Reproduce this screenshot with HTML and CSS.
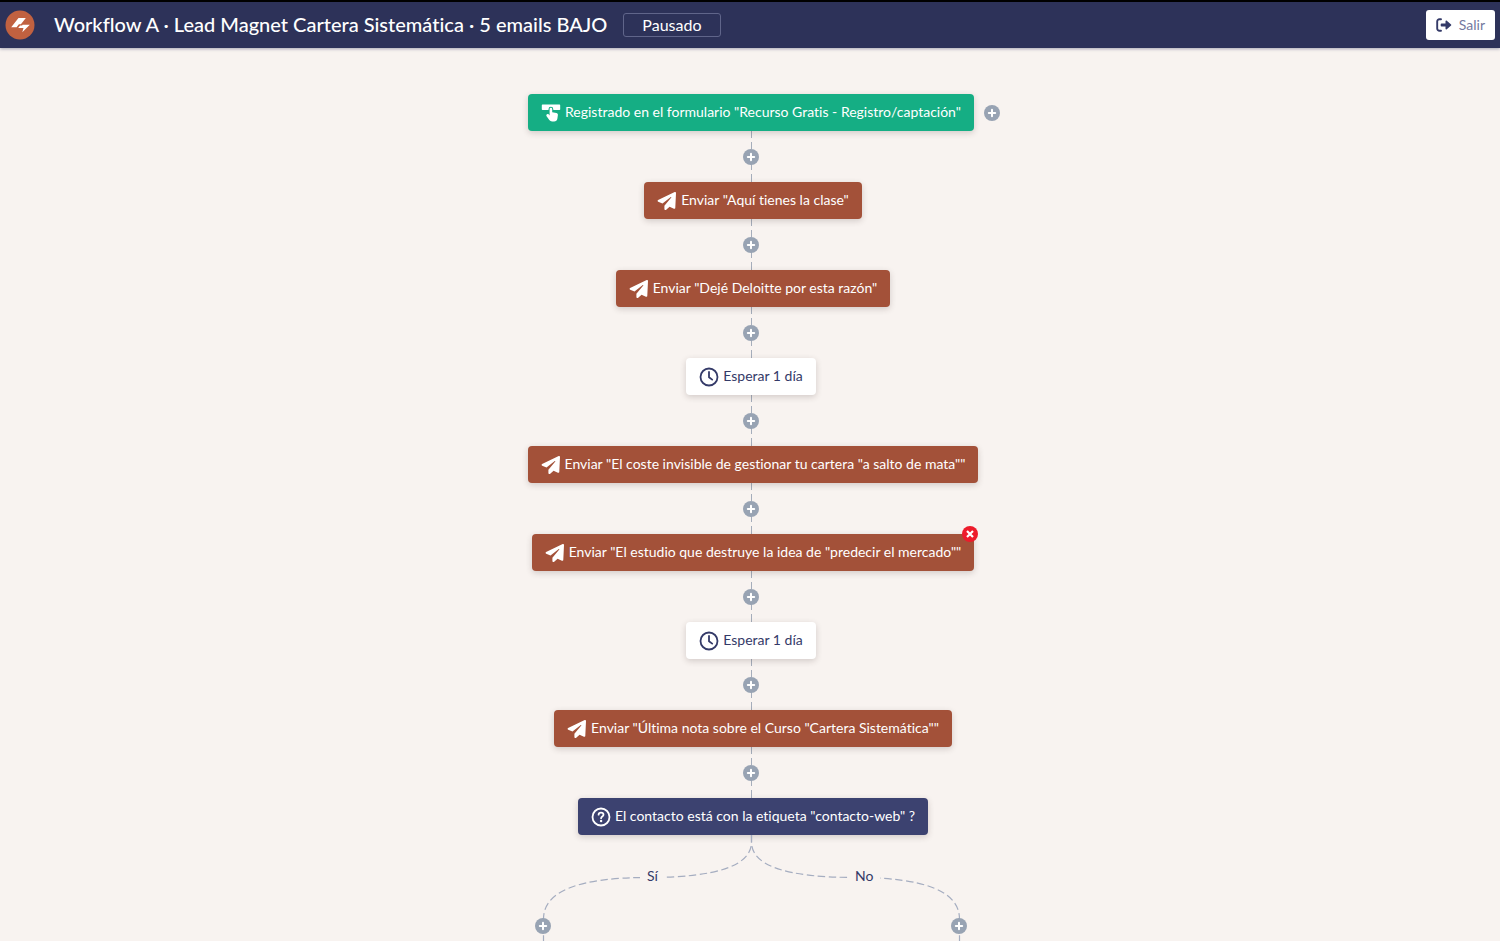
FILE: index.html
```html
<!DOCTYPE html>
<html lang="es">
<head>
<meta charset="utf-8">
<meta name="viewport" content="width=device-width, initial-scale=1">
<title>Workflow A · Lead Magnet Cartera Sistemática</title>
<link rel="stylesheet" href="styles.css">
</head>
<body>
<svg class="sprite" aria-hidden="true">
  <symbol id="i-plus" viewBox="0 0 16 16"><path d="M8 4.800v6.400M4.800 8h6.400" fill="none" stroke="#fff" stroke-width="2" stroke-linecap="round"/></symbol>
  <symbol id="i-plane" viewBox="0 0 20 20"><path fill="currentColor" d="M17.700 1.100c.7-.4 1.300 0 1.300.8l-.7 14.900c0 .8-.7 1.200-1.400.9l-4.300-1.900-3.400 2.900c-.8.600-1.800.1-1.800-.8v-3.200l6.900-8.200c.3-.4-.1-.8-.5-.5l-8.300 6.600-4.300-1.800c-.8-.4-.9-1.200-.1-1.700z"/></symbol>
  <symbol id="i-clock" viewBox="0 0 20 20"><g fill="none" stroke="currentColor" stroke-width="1.800" stroke-linecap="round" stroke-linejoin="round"><circle cx="10" cy="10" r="8.500"/><path d="M10 5v5.200l3.200 2.400"/></g></symbol>
  <symbol id="i-question" viewBox="0 0 20 20"><g fill="none" stroke="currentColor" stroke-width="1.800" stroke-linecap="round" stroke-linejoin="round"><circle cx="10" cy="10" r="8.500"/><path d="M7.600 7.700C7.700 6.400 8.700 5.700 10 5.700c1.400 0 2.500.8 2.500 2.100 0 1.600-2.400 1.900-2.400 3.400"/></g><circle cx="10.100" cy="14" r="1.200" fill="currentColor"/></symbol>
  <symbol id="i-form" viewBox="0 0 20 20"><path fill="currentColor" d="M1.500 1.500h17a.7.7 0 0 1 .7.700v4a.7.7 0 0 1-.7.700H12.300V6.200a2.400 2.400 0 0 0-4.800 0v.7H1.500a.7.7 0 0 1-.7-.700v-4a.7.7 0 0 1 .7-.700z"/><path fill="currentColor" d="M8.600 6.100a1.300 1.300 0 0 1 2.600 0v3.100l4.200.9c1 .3 1.600 1 1.500 2l-.5 3.300c-.2 1.900-1.500 3-3.300 3h-2c-1.200 0-2.100-.5-2.800-1.400l-2.700-3.800c-.5-.8-.2-1.600.5-2 .6-.3 1.200-.2 1.700.3l.8.900z"/></symbol>
  <symbol id="i-link" viewBox="0 0 16 51"><path d="M8.500 0v7M8.500 11v7M8.500 33v6M8.500 43v8" fill="none" stroke="#a5adbb"/></symbol>
</svg>

<header class="topbar">
  <a class="logo" href="#" aria-label="Inicio">
    <svg viewBox="0 0 30 30" aria-hidden="true"><circle cx="15" cy="15" r="14.500" fill="#c16140"/><path fill="#fff" d="M13.500 8h7.300l-4.900 6.200h-2l-2.300 3.100H6.200zM17.600 14.800H24.800l-7.500 7.500 1.200-4.400H13.200l1.900-2.500h2z"/></svg>
  </a>
  <h1 class="title">Workflow A · Lead Magnet Cartera Sistemática · 5 emails BAJO</h1>
  <button class="status" type="button">Pausado</button>
  <button class="exit" type="button">
    <svg viewBox="0 0 16 14" aria-hidden="true"><path d="M5 1.200H3.400A2.200 2.200 0 0 0 1.200 3.400v7.200a2.200 2.200 0 0 0 2.200 2.200H5" fill="none" stroke="#343a68" stroke-width="1.900" stroke-linecap="round"/><path d="M5.500 5.400h4V3.200c0-.7.800-1 1.300-.5l4.300 3.800c.3.300.3.700 0 1l-4.300 3.800c-.5.500-1.300.2-1.300-.5V8.600h-4c-.5 0-.8-.3-.8-.8V6.200c0-.5.3-.8.800-.8z" fill="#343a68"/></svg>
    Salir
  </button>
</header>

<main class="canvas">
  <div class="flow">
    <div class="node node-trigger"><svg class="icon"><use href="#i-form"/></svg><span>Registrado en el formulario "Recurso Gratis - Registro/captación"</span><button class="add add-side" type="button" aria-label="Añadir disparador"><svg><use href="#i-plus"/></svg></button></div>
    <div class="link"><svg class="dashes"><use href="#i-link"/></svg><button class="add" type="button" aria-label="Añadir paso"><svg><use href="#i-plus"/></svg></button></div>
    <div class="node node-send"><svg class="icon"><use href="#i-plane"/></svg><span>Enviar "Aquí tienes la clase"</span></div>
    <div class="link"><svg class="dashes"><use href="#i-link"/></svg><button class="add" type="button" aria-label="Añadir paso"><svg><use href="#i-plus"/></svg></button></div>
    <div class="node node-send"><svg class="icon"><use href="#i-plane"/></svg><span>Enviar "Dejé Deloitte por esta razón"</span></div>
    <div class="link"><svg class="dashes"><use href="#i-link"/></svg><button class="add" type="button" aria-label="Añadir paso"><svg><use href="#i-plus"/></svg></button></div>
    <div class="node node-wait"><svg class="icon"><use href="#i-clock"/></svg><span>Esperar 1 día</span></div>
    <div class="link"><svg class="dashes"><use href="#i-link"/></svg><button class="add" type="button" aria-label="Añadir paso"><svg><use href="#i-plus"/></svg></button></div>
    <div class="node node-send"><svg class="icon"><use href="#i-plane"/></svg><span>Enviar "El coste invisible de gestionar tu cartera "a salto de mata""</span></div>
    <div class="link"><svg class="dashes"><use href="#i-link"/></svg><button class="add" type="button" aria-label="Añadir paso"><svg><use href="#i-plus"/></svg></button></div>
    <div class="node node-send"><svg class="icon"><use href="#i-plane"/></svg><span>Enviar "El estudio que destruye la idea de "predecir el mercado""</span><button class="remove" type="button" aria-label="Eliminar paso"><svg viewBox="0 0 16 16"><path d="M5 5l6 6M11 5l-6 6" fill="none" stroke="#fff" stroke-width="2.200"/></svg></button></div>
    <div class="link"><svg class="dashes"><use href="#i-link"/></svg><button class="add" type="button" aria-label="Añadir paso"><svg><use href="#i-plus"/></svg></button></div>
    <div class="node node-wait"><svg class="icon"><use href="#i-clock"/></svg><span>Esperar 1 día</span></div>
    <div class="link"><svg class="dashes"><use href="#i-link"/></svg><button class="add" type="button" aria-label="Añadir paso"><svg><use href="#i-plus"/></svg></button></div>
    <div class="node node-send"><svg class="icon"><use href="#i-plane"/></svg><span>Enviar "Última nota sobre el Curso "Cartera Sistemática""</span></div>
    <div class="link"><svg class="dashes"><use href="#i-link"/></svg><button class="add" type="button" aria-label="Añadir paso"><svg><use href="#i-plus"/></svg></button></div>
    <div class="node node-condition"><svg class="icon"><use href="#i-question"/></svg><span>El contacto está con la etiqueta "contacto-web" ?</span></div>
    <div class="branches">
      <svg class="curves" viewBox="0 0 432 106" aria-hidden="true"><g fill="none" stroke="#a5adc0" stroke-width="1.200" stroke-dasharray="7.500 3.500"><path d="M216.500 0V7Q216.500 42.500 112.500 42.500Q8.500 42.500 8.500 84V106"/><path d="M216.500 0V7Q216.500 42.500 320.500 42.500Q424.500 42.500 424.500 84V106"/></g></svg>
      <span class="answer answer-yes">Sí</span>
      <span class="answer answer-no">No</span>
      <div class="branch-ends">
        <button class="add" type="button" aria-label="Añadir paso en Sí"><svg><use href="#i-plus"/></svg></button>
        <button class="add" type="button" aria-label="Añadir paso en No"><svg><use href="#i-plus"/></svg></button>
      </div>
    </div>
  </div>
</main>
</body>
</html>
```
FILE: styles.css
```css
* { box-sizing: border-box; }
body {
  margin: 0;
  min-height: 100vh;
  background: #f8f3f0;
  color: #343a68;
  font-family: Lato, "Open Sans", sans-serif;
  font-size: 14px;
  line-height: 20px;
  font-variant-ligatures: none;
}
button { font: inherit; cursor: pointer; }
svg { display: block; }
.sprite { position: absolute; width: 0; height: 0; }

.topbar {
  display: flex;
  align-items: center;
  height: 48px;
  padding: 0 5px;
  border-top: 2px solid #000;
  background: #2d3259;
  color: #fff;
  box-shadow: 0 1px 3px rgba(45, 50, 89, 0.4);
}
.logo { width: 30px; height: 30px; margin-right: 19px; }
.title {
  margin: 0 16px 0 0;
  padding-bottom: 2px;
  font-size: 20px;
  line-height: 24px;
  font-weight: 500;
  white-space: nowrap;
}
.status {
  height: 24px;
  padding: 0 18px;
  border: 1px solid #60658a;
  border-radius: 3px;
  background: transparent;
  color: #fff;
  font-size: 16px;
  line-height: 20px;
}
.exit {
  display: flex;
  align-items: center;
  gap: 7px;
  height: 30px;
  margin-left: auto;
  padding: 0 10px;
  border: 0;
  border-radius: 3px;
  background: #fff;
  color: #7478a0;
}
.exit svg { width: 16px; height: 14px; }

.canvas { padding: 46px 0 0 2px; }
.flow { display: flex; flex-direction: column; align-items: center; }

.node {
  position: relative;
  display: flex;
  align-items: center;
  gap: 4px;
  height: 37px;
  padding: 0 13px;
  border-radius: 4px;
  color: #fff;
  white-space: nowrap;
  box-shadow: 0 2px 6px rgba(60, 40, 40, 0.2);
}
.node span { padding-bottom: 2px; }
.icon { width: 20px; height: 20px; }
.node-trigger { background: #15ae84; }
.node-send { margin-left: 4px; background: #a35139; }
.node-wait { background: #fff; color: #343a68; }
.node-condition { margin-left: 4px; background: #3c4270; }

.link { display: grid; place-items: center; height: 51px; }
.link > * { grid-area: 1 / 1; }
.dashes { width: 16px; height: 51px; }
.add, .remove {
  width: 16px;
  height: 16px;
  padding: 0;
  border: 0;
  border-radius: 50%;
  background: #98a3b3;
}
.add svg, .remove svg { width: 16px; height: 16px; }
.add-side { position: absolute; left: calc(100% + 10px); }
.remove { position: absolute; top: -8px; right: -4px; background: #ed1b2b; }

.branches { position: relative; width: 432px; height: 106px; }
.curves { width: 432px; height: 106px; }
.answer {
  position: absolute;
  top: 31px;
  padding: 0 7px;
  background: #f8f3f0;
}
.answer-yes { left: 105px; }
.answer-no { left: 313px; }
.branch-ends {
  position: absolute;
  inset: 83px 0 auto;
  display: flex;
  justify-content: space-between;
}
```
